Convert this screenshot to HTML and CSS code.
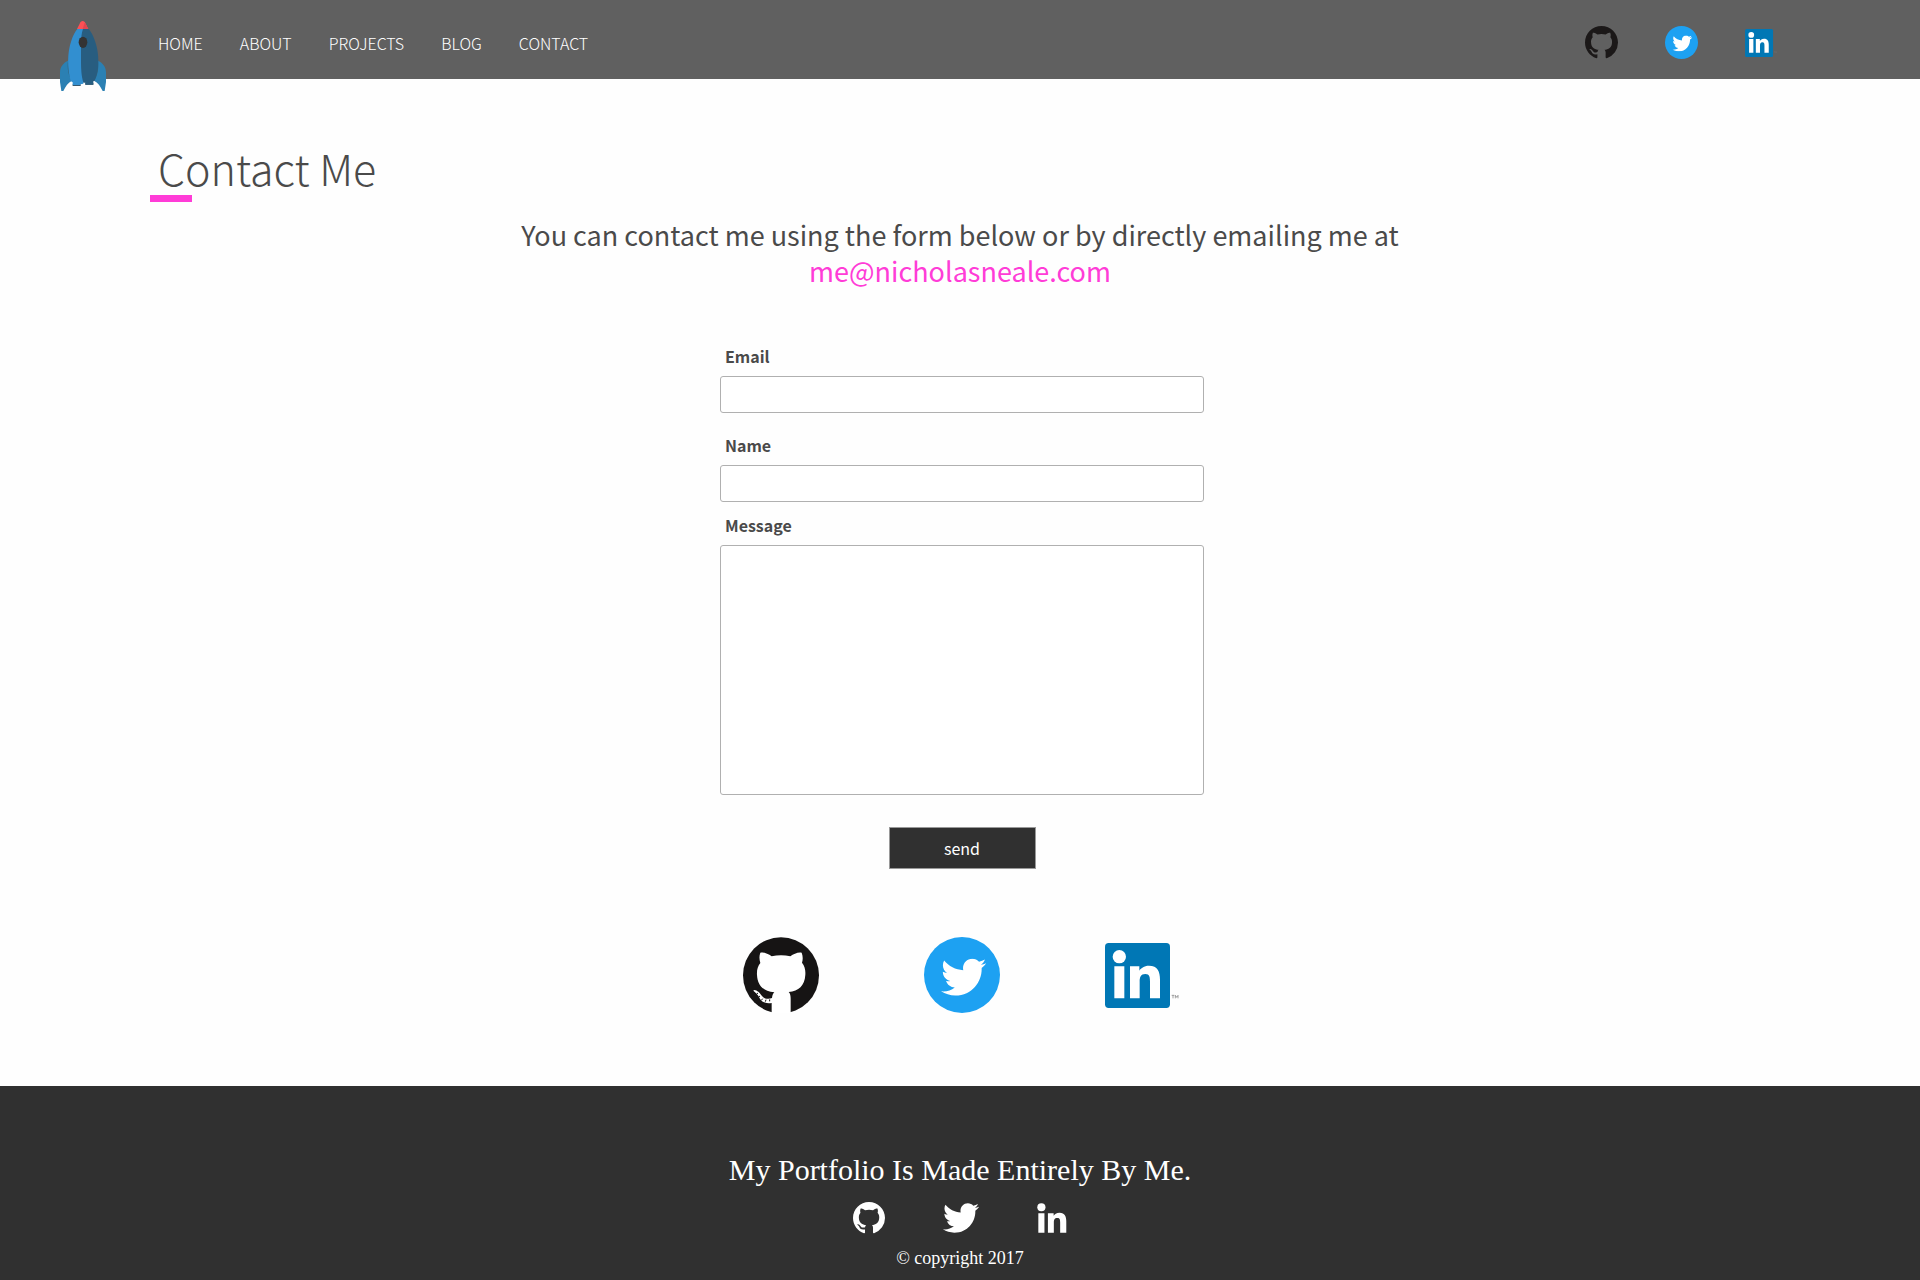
FILE: index.html
```html
<!DOCTYPE html>
<html lang="en">
<head>
<meta charset="utf-8">
<meta name="viewport" content="width=device-width, initial-scale=1">
<title>Contact Me</title>
<link rel="stylesheet" href="styles.css">
</head>
<body>
<svg class="sprite" aria-hidden="true">
  <symbol id="github" viewBox="0 0 16 16"><path d="M8 0C3.58 0 0 3.58 0 8c0 3.54 2.29 6.53 5.47 7.59.4.07.55-.17.55-.38 0-.19-.01-.82-.01-1.49-2.01.37-2.53-.49-2.69-.94-.09-.23-.48-.94-.82-1.13-.28-.15-.68-.52-.01-.53.63-.01 1.08.58 1.23.82.72 1.21 1.87.87 2.33.66.07-.52.28-.87.51-1.07-1.78-.2-3.64-.89-3.64-3.95 0-.87.31-1.59.82-2.15-.08-.2-.36-1.02.08-2.12 0 0 .67-.21 2.2.82.64-.18 1.32-.27 2-.27.68 0 1.36.09 2 .27 1.53-1.04 2.2-.82 2.2-.82.44 1.1.16 1.92.08 2.12.51.56.82 1.27.82 2.15 0 3.07-1.87 3.75-3.65 3.95.29.25.54.73.54 1.48 0 1.07-.01 1.93-.01 2.2 0 .21.15.46.55.38A8.013 8.013 0 0016 8c0-4.42-3.58-8-8-8z"/></symbol>
  <symbol id="bird" viewBox="0 2 24 20"><path d="M23.954 4.569c-.885.389-1.83.654-2.825.775 1.014-.611 1.794-1.574 2.163-2.723-.951.555-2.005.959-3.127 1.184-.896-.959-2.173-1.559-3.591-1.559-2.717 0-4.92 2.203-4.92 4.917 0 .39.045.765.127 1.124C7.691 8.094 4.066 6.13 1.64 3.161c-.427.722-.666 1.561-.666 2.475 0 1.71.87 3.213 2.188 4.096-.807-.026-1.566-.248-2.228-.616v.061c0 2.385 1.693 4.374 3.946 4.827-.413.111-.849.171-1.296.171-.314 0-.615-.03-.916-.086.631 1.953 2.445 3.377 4.604 3.417-1.68 1.319-3.809 2.105-6.102 2.105-.39 0-.779-.023-1.17-.067 2.189 1.394 4.768 2.209 7.557 2.209 9.054 0 13.999-7.496 13.999-13.986 0-.209 0-.42-.015-.63.961-.689 1.8-1.56 2.46-2.548l-.047-.02z"/></symbol>
  <symbol id="twitter" viewBox="0 0 228 228"><circle cx="114" cy="114" r="114" fill="#1da1f2"/><svg x="51" y="64" width="136" height="113" fill="#fff"><use href="#bird"/></svg></symbol>
  <symbol id="in" viewBox="23 20 144 147"><circle cx="43" cy="41" r="20"/><path d="M28 70h30v96H28zM75 70h28v13c4-7 14-15 29-15 26 0 33 18 33 42v56h-30v-50c0-13-1-23-14-23-14 0-17 10-17 23v50H75z"/></symbol>
  <symbol id="linkedin" viewBox="0 0 222 195"><rect width="195" height="195" rx="11" fill="#0077b5"/><g fill="#fff"><circle cx="43" cy="41" r="20"/><path d="M28 70h30v96H28zM75 70h28v13c4-7 14-15 29-15 26 0 33 18 33 42v56h-30v-50c0-13-1-23-14-23-14 0-17 10-17 23v50H75z"/></g><path d="M200 157h8M204 157v9M211 166v-9l4 6 4-6v9" fill="none" stroke="#777" stroke-width="2"/></symbol>
</svg>

<header class="site-header">
  <a class="logo" href="#" aria-label="Home">
    <svg width="46" height="70" viewBox="0 0 138 210">
      <path d="M27 118C10 125 0 138 0 155v28l4 27h6c7-15 14-25 26-31zM111 118c17 7 27 20 27 37v28l-4 27h-6c-7-15-14-25-26-31z" fill="#2b80b3"/>
      <path d="M24 120c-3 25 2 45 12 60l8-4-12-60zM114 120c3 25-2 45-12 60l-8-4 12-60z" fill="#35627a"/>
      <path d="M38 190h24v5H38zM76 186h24v5H76z" fill="#3a474f"/>
      <path d="M52 24h18v164l-9 2v3H38v-9l-6-4c-10-38-11-83 2-121 5-15 11-27 18-35z" fill="#328fd0"/>
      <path d="M69 24h17c8 9 14 21 19 36 14 40 13 85-1 119l-4 2v10H76v-6h-6c-6-20-7-40-7-70V70c0-20 2-35 6-46z" fill="#285d80"/>
      <path d="M68 0c4 0 7 3 9 8l8 16H51l8-16c2-5 5-8 9-8z" fill="#fc5055"/>
      <path d="M74 5l3 3 8 16H68z" fill="#df4650"/>
      <ellipse cx="69" cy="64" rx="13" ry="17" fill="#343333"/>
    </svg>
  </a>
  <nav class="nav" aria-label="Main">
    <a href="#">HOME</a>
    <a href="#">ABOUT</a>
    <a href="#">PROJECTS</a>
    <a href="#">BLOG</a>
    <a href="#">CONTACT</a>
  </nav>
  <div class="header-social">
    <a href="#" aria-label="GitHub"><svg class="mark-dark" width="33" height="33"><use href="#github"/></svg></a>
    <a href="#" aria-label="Twitter"><svg width="33" height="33"><use href="#twitter"/></svg></a>
    <a href="#" aria-label="LinkedIn"><svg width="32" height="28"><use href="#linkedin"/></svg></a>
  </div>
</header>

<main class="content">
  <h1 class="title">Contact Me</h1>
  <p class="lead">You can contact me using the form below or by directly emailing me at<br><a href="mailto:me@nicholasneale.com">me@nicholasneale.com</a></p>

  <form class="form">
    <div class="field">
      <label for="email">Email</label>
      <input id="email" type="email">
    </div>
    <div class="field field-name">
      <label for="name">Name</label>
      <input id="name" type="text">
    </div>
    <div class="field">
      <label for="message">Message</label>
      <textarea id="message"></textarea>
    </div>
    <button class="send" type="submit">send</button>
  </form>

  <div class="social">
    <a href="#" aria-label="GitHub">
      <svg width="76" height="76" viewBox="0 0 228 228">
        <circle cx="114" cy="115" r="114" fill="#161414"/>
        <path d="M52 47c12-2 24 4 34 11 18-4 38-4 56 0 10-7 22-13 34-11 4 10 4 22 1 30 8 10 11 22 10 36-2 34-20 48-50 52 5 5 6 12 6 20v43H86v-30c-22 3-32-5-38-18-4-8-10-13-17-19 2-5 10-1 15 3 9 7 12 20 25 21 6 1 11 0 16-2 1-8 3-13 7-17-32-4-50-18-52-52-1-15 2-26 10-36-3-9-4-21 0-31z" fill="#fff"/>
        <path d="M45 168l-5 4M51 177l-5 4M59 185l-4 5M69 188l-2 6M80 187v6" stroke="#161414" stroke-width="3"/>
      </svg>
    </a>
    <a href="#" aria-label="Twitter"><svg width="76" height="76"><use href="#twitter"/></svg></a>
    <a href="#" aria-label="LinkedIn"><svg width="74" height="65"><use href="#linkedin"/></svg></a>
  </div>
</main>

<footer class="site-footer">
  <p class="tagline">My Portfolio Is Made Entirely By Me.</p>
  <div class="footer-social">
    <a href="#" aria-label="GitHub"><svg width="32" height="32"><use href="#github"/></svg></a>
    <a href="#" aria-label="Twitter"><svg width="36" height="30"><use href="#bird"/></svg></a>
    <a href="#" aria-label="LinkedIn"><svg width="30" height="30"><use href="#in"/></svg></a>
  </div>
  <p class="copyright">© copyright 2017</p>
</footer>
</body>
</html>
```
FILE: styles.css
```css
* {
  box-sizing: border-box;
}

body {
  margin: 0;
  min-height: 100vh;
  display: flex;
  flex-direction: column;
  background: #fefefe;
  color: #4a4a4a;
  font-family: "Noto Sans CJK JP", "Noto Sans", sans-serif;
}

h1,
p {
  margin: 0;
}

a {
  color: inherit;
  text-decoration: none;
}

svg {
  display: block;
}

.sprite {
  position: absolute;
  width: 0;
  height: 0;
}

.site-header {
  display: flex;
  align-items: center;
  height: 79px;
  padding: 6px 143px 0 60px;
  background: #606060;
  color: #fff;
}

.logo {
  align-self: flex-start;
  margin-top: 15px;
}

.nav {
  display: flex;
  gap: 37px;
  margin-left: 52px;
  font-size: 16px;
  font-weight: 300;
  line-height: 24px;
}

.header-social {
  display: flex;
  align-items: center;
  gap: 47px;
  margin-left: auto;
}

.mark-dark {
  fill: #1b1818;
}

.content {
  flex: 1;
  padding: 60px 150px 71px;
}

.title {
  width: max-content;
  padding-left: 8px;
  font-size: 43px;
  font-weight: 300;
  line-height: 56px;
}

.title::after {
  content: "";
  display: block;
  width: 42px;
  height: 7px;
  margin-left: -8px;
  background: #ff3cd7;
}

.lead {
  margin-top: 15px;
  text-align: center;
  font-size: 27px;
  line-height: 36px;
}

.lead a {
  color: #ff3cd7;
}

.form {
  display: flex;
  flex-direction: column;
  width: 488px;
  margin: 55px auto 0;
  padding-left: 4px;
}

.field {
  display: flex;
  flex-direction: column;
  gap: 8px;
}

.field label {
  padding-left: 5px;
  font-size: 16px;
  font-weight: 700;
  line-height: 24px;
}

.field input,
.field textarea {
  width: 100%;
  height: 37px;
  padding: 4px 8px;
  border: 1px solid #b0b0b0;
  border-radius: 3px;
  background: #fff;
  font: inherit;
}

.field textarea {
  height: 250px;
  resize: none;
}

.field-name {
  margin: 20px 0 11px;
}

.send {
  align-self: center;
  width: 147px;
  height: 42px;
  margin-top: 32px;
  padding: 0;
  border: 1px solid #999;
  background: #303030;
  color: #fff;
  font-family: inherit;
  font-size: 16px;
  line-height: 24px;
}

.social {
  display: flex;
  align-items: center;
  justify-content: space-between;
  width: 438px;
  margin: 68px auto 0;
  padding-left: 2px;
}

.site-footer {
  display: flex;
  flex-direction: column;
  align-items: center;
  padding: 64px 0 10px;
  background: #303030;
  color: #fff;
  font-family: "Liberation Serif", serif;
}

.tagline {
  font-size: 30px;
  line-height: 40px;
}

.footer-social {
  display: flex;
  align-items: center;
  justify-content: space-between;
  width: 214px;
  margin-top: 12px;
  fill: #fff;
}

.copyright {
  margin-top: 12px;
  font-size: 18px;
  line-height: 24px;
}
```
